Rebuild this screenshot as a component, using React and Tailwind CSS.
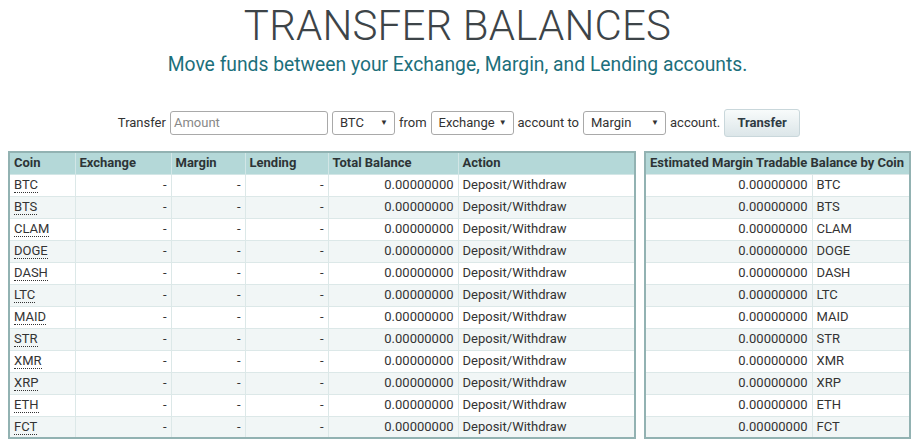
import React from "react";

const coins = ["BTC","BTS","CLAM","DOGE","DASH","LTC","MAID","STR","XMR","XRP","ETH","FCT"];

function Select({ label, w }) {
  return (
    <div className={`flex items-center justify-between h-[24px] border border-[#a9a9a9] rounded-[3px] bg-white pl-[7px] pr-[6px] ${w}`}>
      <span className="text-[#333]">{label}</span>
      <span className="text-[8px] text-[#333]">▼</span>
    </div>
  );
}

export default function App() {
  const cell = "border border-[#dce8e8] px-[4px] h-[22px] leading-[20px]";
  return (
    <div className="bg-white w-[915px] h-[444px] overflow-hidden text-[#333]" style={{ fontFamily: "Roboto, 'Liberation Sans', sans-serif" }}>
      <h1 className="text-center text-[42px] leading-[46px] font-light text-[#3d4448] pt-[3px] tracking-[0.2px]">TRANSFER BALANCES</h1>
      <p className="text-center text-[19.3px] leading-[24px] text-[#1c6f7b] mt-[4px]">Move funds between your Exchange, Margin, and Lending accounts.</p>
      <div className="flex items-center justify-center gap-[4px] text-[13px] mt-[32px] h-[28px] pl-[3px]">
        <span>Transfer</span>
        <div className="w-[158px] h-[24px] border border-[#a9a9a9] rounded-[3px] bg-white px-[3px] flex items-center text-[#888]">Amount</div>
        <Select label="BTC" w="w-[63px]" />
        <span>from</span>
        <Select label="Exchange" w="w-[83px]" />
        <span>account to</span>
        <Select label="Margin" w="w-[83px]" />
        <span>account.</span>
        <button className="w-[76px] h-[28px] rounded-[3px] border border-[#c9d7db] bg-gradient-to-b from-[#f8fbfb] to-[#dce6e9] font-bold text-[#2f3b43] text-[13px]">Transfer</button>
      </div>
      <div className="flex gap-[8px] pl-[8px] mt-[14px] text-[13px]">
        <table className="table-fixed border-collapse border-2 border-[#92b2b2] w-[626px] self-start">
          <colgroup>
            <col className="w-[66px]" />
            <col className="w-[96px]" />
            <col className="w-[74px]" />
            <col className="w-[83px]" />
            <col className="w-[130px]" />
            <col className="w-[177px]" />
          </colgroup>
          <thead>
            <tr className="bg-[#b4d8d8] font-bold text-left">
              {["Coin","Exchange","Margin","Lending","Total Balance","Action"].map(h => (
                <th key={h} className="border border-[#d2e6e6] border-t-0 px-[4px] h-[22px] leading-[20px] font-bold text-[#2d3436]">{h}</th>
              ))}
            </tr>
          </thead>
          <tbody>
            {coins.map((c, i) => (
              <tr key={c} className={i % 2 ? "bg-[#f1f6f6]" : "bg-white"}>
                <td className={cell}><span className="border-b border-dotted border-[#333] leading-[15px] inline-block">{c}</span></td>
                <td className={`${cell} text-right`}>-</td>
                <td className={`${cell} text-right`}>-</td>
                <td className={`${cell} text-right`}>-</td>
                <td className={`${cell} text-right`}>0.00000000</td>
                <td className={cell}>Deposit/Withdraw</td>
              </tr>
            ))}
          </tbody>
        </table>
        <table className="table-fixed border-collapse border-2 border-[#92b2b2] w-[265px] self-start">
          <colgroup>
            <col className="w-[167px]" />
            <col className="w-[98px]" />
          </colgroup>
          <thead>
            <tr className="bg-[#b4d8d8]">
              <th colSpan={2} className="px-[4px] h-[22px] leading-[20px] font-bold text-[#2d3436] text-left whitespace-nowrap">Estimated Margin Tradable Balance by Coin</th>
            </tr>
          </thead>
          <tbody>
            {coins.map((c, i) => (
              <tr key={c} className={i % 2 ? "bg-[#f1f6f6]" : "bg-white"}>
                <td className={`${cell} text-right`}>0.00000000</td>
                <td className={cell}>{c}</td>
              </tr>
            ))}
          </tbody>
        </table>
      </div>
    </div>
  );
}
